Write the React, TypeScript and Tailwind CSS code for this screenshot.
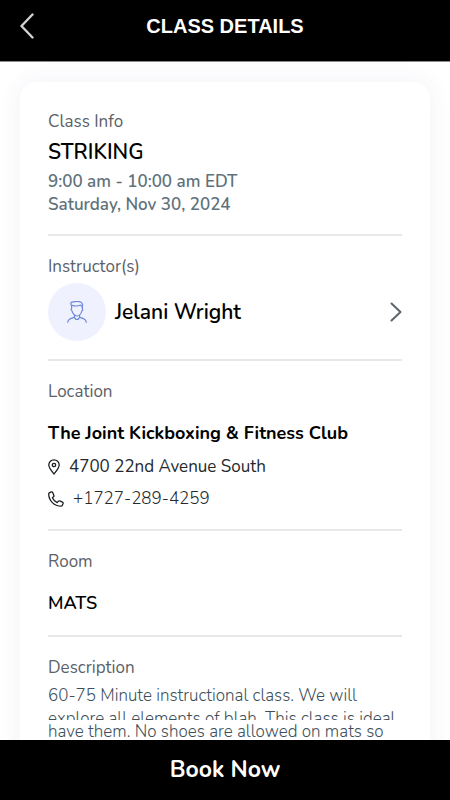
import type { ReactNode } from "react";

function InfoSection({ label, children }: { label: string; children: ReactNode }) {
  return (
    <section className="border-b-2 border-[#e8e8e8] pt-[19px] pb-[18px] first:pt-0 last:border-b-0">
      <h2 className="text-[17px] leading-6 text-[#5b6168]">{label}</h2>
      {children}
    </section>
  );
}

function PersonIcon() {
  return (
    <svg width="20" height="22" viewBox="0 0 20 22" fill="none" stroke="#6f86dc" strokeWidth="1.2" strokeLinecap="round" strokeLinejoin="round" aria-hidden="true">
      <path d="M4.600 5.200C3.500 3 3.700.6 5.200 1.200 8 .4 12 .3 14 1.200c1.600.8 1.800 2.400 1.300 4.600" />
      <path d="M5 4.200c2.600 1 6.400.8 8.600-.2.600.8 1 1.400 1.700 1.800" />
      <path d="M4.600 5.200v2.600c-.8.5-.4 1.700.4 2 .6 2.600 2.800 5.200 5 5.200s4.300-2.600 4.900-5.200c.8-.3 1.200-1.500.4-2v-2" />
      <path d="M7.400 14.400v2l1.400 1.900h2.400l1.400-1.900v-2" />
      <path d="M.8 21.300c.1-3 2-3.600 6.600-4.900M19.200 21.300c-.1-3-2-3.600-6.600-4.900" />
    </svg>
  );
}

function PinIcon() {
  return (
    <svg width="12" height="16" viewBox="0 0 12 16" fill="none" stroke="#1c1f22" strokeWidth="1.3" strokeLinejoin="round" aria-hidden="true">
      <path d="M6 15C3.4 11.8.8 8.8.8 6a5.2 5.2 0 0 1 10.4 0c0 2.8-2.6 5.8-5.2 9z" />
      <circle cx="6" cy="6" r="1.7" />
    </svg>
  );
}

function PhoneIcon() {
  return (
    <svg width="16" height="16" viewBox="0 0 16 16" fill="none" stroke="#1c1f22" strokeWidth="1.3" strokeLinejoin="round" aria-hidden="true">
      <path d="M1.2 1.9 3.3.9c.6-.2 1.1 0 1.4.6l1.2 2.9c.2.5.1.9-.3 1.2L4.4 6.8c.9 2.1 2.5 3.8 4.8 4.8l1.2-1.4c.4-.4.8-.5 1.3-.3l2.8 1.2c.6.3.8.8.6 1.4l-.9 2c-.2.5-.6.7-1.1.7C6.3 15.2.8 9.700.7 3c0-.5.1-.9.5-1.100z" />
    </svg>
  );
}

export default function App() {
  return (
    <div className="flex h-screen flex-col bg-white font-['Nunito','Open_Sans',sans-serif] text-black">
      <header className="grid shrink-0 grid-cols-[1fr_auto_1fr] items-center border-b border-[#8c8c8c] bg-black px-5 pt-2 pb-[17px]">
        <button type="button" aria-label="Back" className="flex h-9 items-center justify-self-start">
          <svg width="14" height="26" viewBox="0 0 14 26" fill="none" stroke="#d2d2d2" strokeWidth="2.4" strokeLinecap="round" strokeLinejoin="round" aria-hidden="true">
            <path d="M12.500 1.500 1.500 13l11 11.500" />
          </svg>
        </button>
        <h1 className="font-['Liberation_Sans',Arial,sans-serif] text-[20px] leading-9 font-bold text-white">CLASS DETAILS</h1>
      </header>

      <main className="min-h-0 flex-1 overflow-hidden px-5 pt-5">
        <article className="rounded-2xl bg-white px-7 pt-7 pb-5 shadow-[0_0_24px_rgba(60,70,140,0.07)]">
          <InfoSection label="Class Info">
            <p className="mt-1 text-[21px] leading-7 font-semibold">STRIKING</p>
            <p className="mt-1 text-[17px] leading-[23px] font-semibold text-[#5f727b]">
              9:00 am - 10:00 am EDT
              <br />
              Saturday, Nov 30, 2024
            </p>
          </InfoSection>

          <InfoSection label="Instructor(s)">
            <button type="button" className="mt-1 flex w-full items-center text-left">
              <span className="flex size-[58px] items-center justify-center rounded-full bg-[#eff1fe]">
                <PersonIcon />
              </span>
              <span className="ml-[9px] flex-1 text-[21px] leading-7 font-semibold">Jelani Wright</span>
              <svg width="12" height="20" viewBox="0 0 12 20" fill="none" stroke="#5b636b" strokeWidth="2" strokeLinecap="round" strokeLinejoin="round" aria-hidden="true">
                <path d="m1.500 1.500 9 8.500-9 8.500" />
              </svg>
            </button>
          </InfoSection>

          <InfoSection label="Location">
            <p className="mt-[15px] text-[18px] leading-7 font-bold">The Joint Kickboxing &amp; Fitness Club</p>
            <p className="mt-2 flex items-center gap-[9px] text-[17px] leading-6 text-[#24282c]">
              <PinIcon />
              4700 22nd Avenue South
            </p>
            <a href="tel:+17272894259" className="mt-2 flex items-center gap-[9px] text-[17px] leading-6 font-light text-[#24282c]">
              <PhoneIcon />
              +1727-289-4259
            </a>
          </InfoSection>

          <InfoSection label="Room">
            <p className="mt-[15px] text-[18px] leading-7 font-semibold">MATS</p>
          </InfoSection>

          <InfoSection label="Description">
            <div className="mt-1 text-[17px] leading-[23px] font-light whitespace-nowrap text-[#3d505a]">
              <p className="h-9 overflow-hidden">
                60-75 Minute instructional class. We will
                <br />
                explore all elements of blah. This class is ideal
              </p>
              <p>have them. No shoes are allowed on mats so</p>
            </div>
          </InfoSection>
        </article>
      </main>

      <button type="button" className="h-[60px] shrink-0 bg-black text-[23px] leading-7 font-bold text-white">
        Book Now
      </button>
    </div>
  );
}
